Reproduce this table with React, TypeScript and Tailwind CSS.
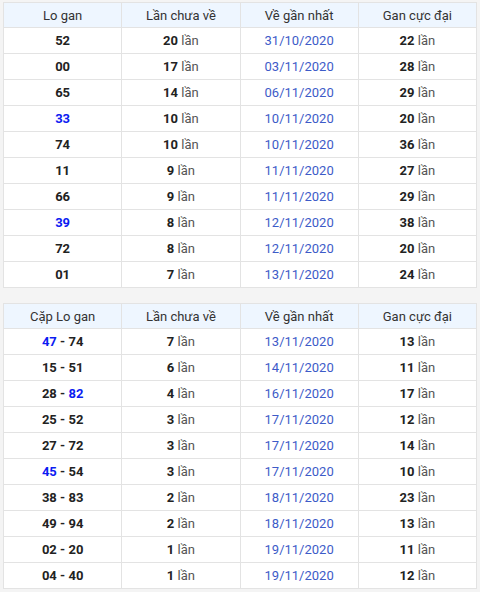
const loGan = [
  { so: '52', lan: 20, ngay: '31/10/2020', max: 22 },
  { so: '00', lan: 17, ngay: '03/11/2020', max: 28 },
  { so: '65', lan: 14, ngay: '06/11/2020', max: 29 },
  { so: '33', lan: 10, ngay: '10/11/2020', max: 20, hot: true },
  { so: '74', lan: 10, ngay: '10/11/2020', max: 36 },
  { so: '11', lan: 9, ngay: '11/11/2020', max: 27 },
  { so: '66', lan: 9, ngay: '11/11/2020', max: 29 },
  { so: '39', lan: 8, ngay: '12/11/2020', max: 38, hot: true },
  { so: '72', lan: 8, ngay: '12/11/2020', max: 20 },
  { so: '01', lan: 7, ngay: '13/11/2020', max: 24 },
];

const capLoGan = [
  { a: '47', b: '74', hot: 'a', lan: 7, ngay: '13/11/2020', max: 13 },
  { a: '15', b: '51', lan: 6, ngay: '14/11/2020', max: 11 },
  { a: '28', b: '82', hot: 'b', lan: 4, ngay: '16/11/2020', max: 17 },
  { a: '25', b: '52', lan: 3, ngay: '17/11/2020', max: 12 },
  { a: '27', b: '72', lan: 3, ngay: '17/11/2020', max: 14 },
  { a: '45', b: '54', hot: 'a', lan: 3, ngay: '17/11/2020', max: 10 },
  { a: '38', b: '83', lan: 2, ngay: '18/11/2020', max: 23 },
  { a: '49', b: '94', lan: 2, ngay: '18/11/2020', max: 13 },
  { a: '02', b: '20', lan: 1, ngay: '19/11/2020', max: 11 },
  { a: '04', b: '40', lan: 1, ngay: '19/11/2020', max: 12 },
];

function Lan({ n }: { n: number }) {
  return (
    <>
      <b className="font-bold text-[#222]">{n}</b>{' '}
      <span className="text-[#555]">lần</span>
    </>
  );
}

function Head({ first }: { first: string }) {
  return (
    <thead>
      <tr className="bg-[#eef6ff] text-[#333]">
        {[first, 'Lần chưa về', 'Về gần nhất', 'Gan cực đại'].map((h) => (
          <th key={h} className="h-[25px] w-1/4 border border-[#e3e3e3] font-normal">
            {h}
          </th>
        ))}
      </tr>
    </thead>
  );
}

const td = 'h-[26px] border border-[#e3e3e3] p-0';

export default function App() {
  return (
    <div
      className="min-h-[592px] bg-[#f4f4f4] px-[3px] pt-[2px] text-[13px] leading-none"
      style={{ fontFamily: 'Roboto, "Liberation Sans", sans-serif' }}
    >
      <table className="w-full table-fixed border-collapse bg-white text-center">
        <Head first="Lo gan" />
        <tbody>
          {loGan.map((r) => (
            <tr key={r.so}>
              <td className={`${td} font-bold ${r.hot ? 'text-[#0b1cf2]' : 'text-[#222]'}`}>{r.so}</td>
              <td className={td}>
                <Lan n={r.lan} />
              </td>
              <td className={`${td} text-[#3d5bc8]`}>{r.ngay}</td>
              <td className={td}>
                <Lan n={r.max} />
              </td>
            </tr>
          ))}
        </tbody>
      </table>

      <table className="mt-[15px] w-full table-fixed border-collapse bg-white text-center">
        <Head first="Cặp Lo gan" />
        <tbody>
          {capLoGan.map((r) => (
            <tr key={r.a}>
              <td className={`${td} font-bold text-[#222]`}>
                <span className={r.hot === 'a' ? 'text-[#0b1cf2]' : ''}>{r.a}</span> -{' '}
                <span className={r.hot === 'b' ? 'text-[#0b1cf2]' : ''}>{r.b}</span>
              </td>
              <td className={td}>
                <Lan n={r.lan} />
              </td>
              <td className={`${td} text-[#3d5bc8]`}>{r.ngay}</td>
              <td className={td}>
                <Lan n={r.max} />
              </td>
            </tr>
          ))}
        </tbody>
      </table>
    </div>
  );
}
